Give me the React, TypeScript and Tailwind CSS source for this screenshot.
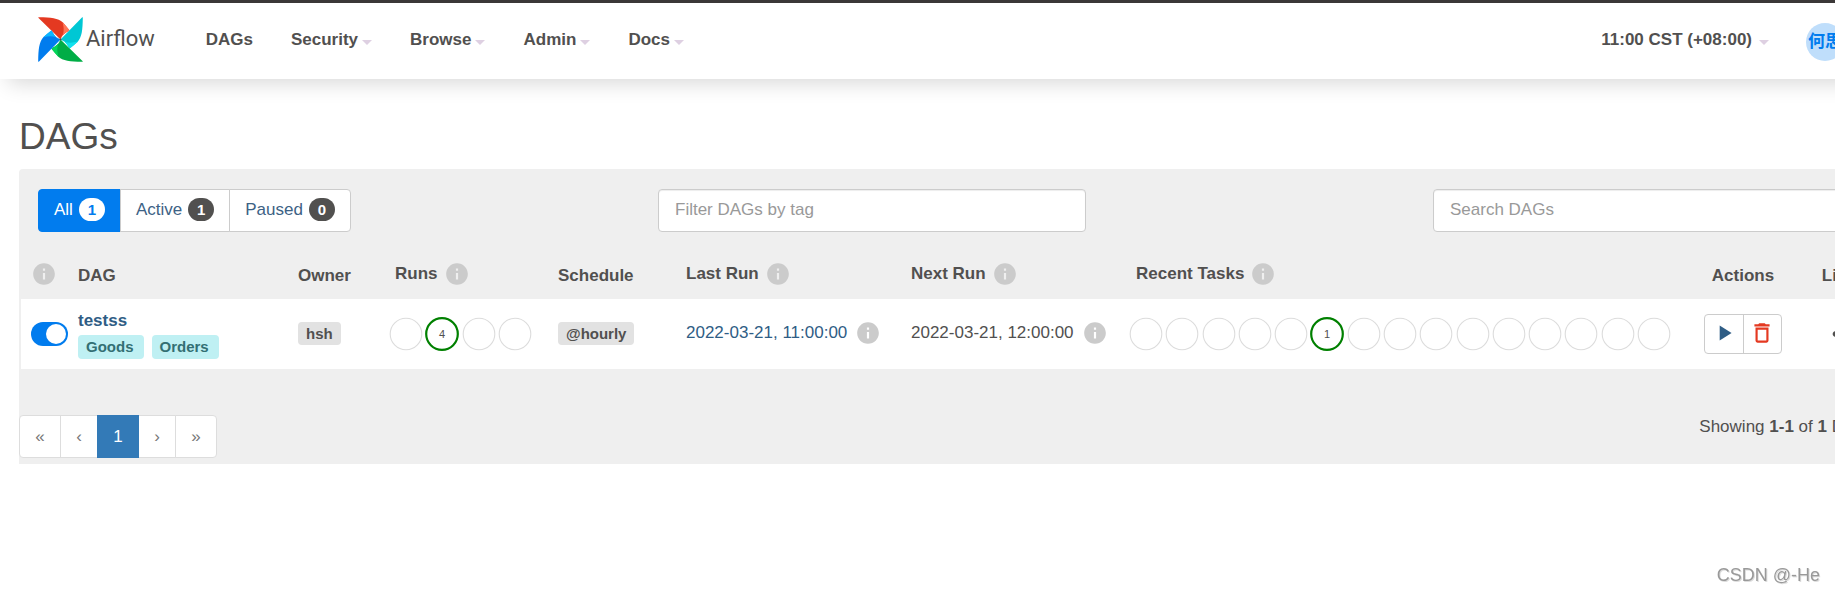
import { useState } from "react"
import { MdDeleteOutline, MdInfo, MdMoreHoriz, MdPlayArrow } from "react-icons/md"

const menus = ["Security", "Browse", "Admin", "Docs"]

const filters = [
  { label: "All", count: 1 },
  { label: "Active", count: 1 },
  { label: "Paused", count: 0 },
]

const tags = ["Goods", "Orders"]
const runs = [0, 4, 0, 0]
const recentTasks = [0, 0, 0, 0, 0, 1, 0, 0, 0, 0, 0, 0, 0, 0, 0]

// four blades, each a quarter turn from the last
const blades = [
  { angle: 0, dark: "#e43921", light: "#ff7557" },
  { angle: 90, dark: "#00c7d4", light: "#11e1ee" },
  { angle: 180, dark: "#00ad46", light: "#04d659" },
  { angle: 270, dark: "#017cee", light: "#0cb6ff" },
]

function Logo() {
  return (
    <svg width="45" height="45" viewBox="0 0 45 45" aria-hidden="true">
      {blades.map(({ angle, dark, light }) => (
        <g key={angle} transform={`rotate(${angle} 22.5 22.5)`}>
          <path d="M22.5 22.500 L.3 .8 Q0 0 1 .2 C13 .4 20 1 25 5.500 L31.500 13.500 C27 16 24 18 22.500 22.500Z" fill={dark} />
          <path d="M22.5 22.500 C26 17 26.500 12 24.500 5.200 Q28.500 9 31.800 13.500 C27 16 24 18 22.500 22.500Z" fill={light} />
        </g>
      ))}
      <circle cx="22.500" cy="22.500" r="1" fill="#51504f" />
    </svg>
  )
}

function Caret() {
  return <span className="mt-1 border-x-5 border-t-5 border-x-transparent border-t-[#ded0e2]" />
}

function Info() {
  return <MdInfo size={26} className="shrink-0 text-[#cbcbcb]" />
}

function Circles({ counts }: { counts: number[] }) {
  return (
    <div className="flex justify-between">
      {counts.map((count, i) => (
        <svg key={i} width="34" height="34" viewBox="0 0 34 34">
          <circle
            cx="17"
            cy="17"
            r="15.800"
            fill="none"
            stroke={count ? "#008000" : "#dcdcdc"}
            strokeWidth={count ? 2.2 : 1.1}
          />
          {count > 0 && (
            <text x="17" y="21" textAnchor="middle" fontSize="11" fill="#51504f">
              {count}
            </text>
          )}
        </svg>
      ))}
    </div>
  )
}

function Navbar() {
  return (
    <nav className="flex h-[79px] items-center border-t-3 border-[#3b3838] bg-white pb-1 pl-[38px] pr-[73px] font-bold shadow-[0_12px_20px_-8px_rgba(0,0,0,0.16)]">
      <a href="#" className="flex items-center gap-[3px] font-[Roboto,sans-serif] text-[22px] font-normal">
        <Logo />
        Airflow
      </a>
      <div className="ml-[51px] flex gap-[38px] pt-0.5">
        <a href="#">DAGs</a>
        {menus.map((menu) => (
          <button key={menu} className="flex items-center gap-1">
            {menu}
            <Caret />
          </button>
        ))}
      </div>
      <div className="ml-auto flex items-center gap-[37px] pt-0.5">
        <button className="flex items-center gap-[7px]">
          11:00 CST (+08:00)
          <Caret />
        </button>
        <button className="mt-1 flex size-[38px] items-center justify-center rounded-full bg-[#bfdefb] text-[#017cee]">
          何思
        </button>
      </div>
    </nav>
  )
}

function Toolbar({ filter, setFilter }: { filter: string; setFilter: (f: string) => void }) {
  const input =
    "h-[43px] rounded border border-[#ccc] bg-white px-4 pb-0.5 shadow-[inset_0_1px_1px_rgba(0,0,0,0.075)] placeholder:text-[#999]"

  return (
    <div className="flex px-[19px] pt-5">
      <div className="flex">
        {filters.map(({ label, count }) => {
          const active = filter === label
          return (
            <button
              key={label}
              onClick={() => setFilter(label)}
              className={`-ml-px flex h-[43px] items-center gap-1.5 border px-[15px] pb-0.5 first:ml-0 first:rounded-l last:rounded-r ${
                active ? "border-[#017cee] bg-[#017cee] text-white" : "border-[#ccc] bg-white text-[#3d6285]"
              }`}
            >
              {label}
              <span
                className={`flex h-[23px] w-[26px] items-center justify-center rounded-full text-[15px] font-bold ${
                  active ? "bg-white text-[#017cee]" : "bg-[#51504f] text-white"
                }`}
              >
                {count}
              </span>
            </button>
          )
        })}
      </div>
      <input type="text" aria-label="Filter DAGs by tag" placeholder="Filter DAGs by tag" className={`${input} ml-auto w-[428px]`} />
      <input type="search" aria-label="Search DAGs" placeholder="Search DAGs" className={`${input} ml-[347px] w-[446px]`} />
    </div>
  )
}

function DagTable() {
  const [enabled, setEnabled] = useState(true)

  return (
    <div className="px-0.5 pt-5">
      <table className="w-full table-fixed text-left">
        <colgroup>
          <col className="w-[47px]" />
          <col />
          <col className="w-[92px]" />
          <col className="w-[168px]" />
          <col className="w-[128px]" />
          <col className="w-[225px]" />
          <col className="w-[219px]" />
          <col className="w-[574px]" />
          <col className="w-[98px]" />
          <col className="w-[104px]" />
        </colgroup>
        <thead>
          <tr className="h-[47px]">
            <th className="pb-1 pl-2.5"><Info /></th>
            <th className="pl-2.5">DAG</th>
            <th className="pl-2.5">Owner</th>
            <th className="pb-1 pl-[15px]"><span className="flex items-center gap-1.5">Runs <Info /></span></th>
            <th className="pl-2.5">Schedule</th>
            <th className="pb-1 pl-2.5"><span className="flex items-center gap-1.5">Last Run <Info /></span></th>
            <th className="pb-1 pl-2.5"><span className="flex items-center gap-1.5">Next Run <Info /></span></th>
            <th className="pb-1 pl-4"><span className="flex items-center gap-1.5">Recent Tasks <Info /></span></th>
            <th className="text-center">Actions</th>
            <th className="text-center">Links</th>
          </tr>
        </thead>
        <tbody>
          <tr className="h-[70px] bg-white">
            <td className="pl-2.5">
              <label className="flex h-6 w-[37px] cursor-pointer items-center rounded-full bg-[#ccc] px-0.5 has-checked:justify-end has-checked:bg-[#017cee]">
                <input
                  type="checkbox"
                  aria-label="Toggle testss"
                  className="peer sr-only"
                  checked={enabled}
                  onChange={(e) => setEnabled(e.target.checked)}
                />
                <span className="size-5 rounded-full bg-white" />
              </label>
            </td>
            <td className="pl-2.5">
              <a href="#" className="block leading-6 font-bold text-[#2f5d85]">testss</a>
              <div className="flex gap-2 pt-0.5">
                {tags.map((tag) => (
                  <a key={tag} href="#" className="rounded bg-[#bff0f3] pr-2.5 pl-2 text-[15px] leading-6 font-bold text-[#336f73]">
                    {tag}
                  </a>
                ))}
              </div>
            </td>
            <td className="pl-2.5">
              <a href="#" className="inline-block rounded bg-[#e2e2e2] px-2 text-[15px] leading-[23px] font-bold">hsh</a>
            </td>
            <td className="pr-4 pl-[9px]"><Circles counts={runs} /></td>
            <td className="pl-2.5">
              <a href="#" className="inline-block rounded bg-[#e2e2e2] px-2 text-[15px] leading-[23px] font-bold">@hourly</a>
            </td>
            <td className="pb-0.5 pl-2.5">
              <span className="flex items-center gap-2 whitespace-nowrap">
                <a href="#" className="text-[#2f5d85]">2022-03-21, 11:00:00</a>
                <Info />
              </span>
            </td>
            <td className="pb-0.5 pl-2.5">
              <span className="flex items-center gap-2 whitespace-nowrap">
                <time>2022-03-21, 12:00:00</time>
                <Info />
              </span>
            </td>
            <td className="pr-[23px] pl-[9px]"><Circles counts={recentTasks} /></td>
            <td>
              <div className="mx-auto flex h-10 w-[78px] rounded border border-[#ccc]">
                <button aria-label="Trigger DAG" className="flex flex-1 items-center justify-center border-r border-[#ccc] pb-0.5 text-[#2f5d85]">
                  <MdPlayArrow size={26} />
                </button>
                <button aria-label="Delete DAG" className="flex flex-1 items-center justify-center pb-0.5 text-[#e43921]">
                  <MdDeleteOutline size={26} />
                </button>
              </div>
            </td>
            <td>
              <button aria-label="Links" className="mx-auto block"><MdMoreHoriz size={34} /></button>
            </td>
          </tr>
        </tbody>
      </table>
    </div>
  )
}

function Pagination() {
  const item = "-ml-px flex h-[43px] items-center justify-center border border-[#ddd] bg-white text-[#777]"

  return (
    <div className="flex items-start justify-between pt-[46px] pr-[21px] pb-1.5">
      <div className="flex pl-px">
        <a href="#" aria-label="First" className={`${item} w-[42px] rounded-l`}>«</a>
        <a href="#" aria-label="Previous" className={`${item} w-[38px]`}>‹</a>
        <a href="#" className="z-10 -ml-px flex h-[43px] w-[42px] items-center justify-center bg-[#337ab7] text-white">1</a>
        <a href="#" aria-label="Next" className={`${item} w-[38px]`}>›</a>
        <a href="#" aria-label="Last" className={`${item} w-[42px] rounded-r`}>»</a>
      </div>
      <div>
        Showing <strong>1-1</strong> of <strong>1</strong> DAGs
      </div>
    </div>
  )
}

export default function App() {
  const [filter, setFilter] = useState("All")

  return (
    <div className="min-h-screen overflow-hidden bg-white font-['Liberation_Sans',Arial,'Noto_Sans_CJK_SC',sans-serif] text-[17px] leading-6 text-[#51504f]">
      {/* content runs a little past the right edge */}
      <div className="w-[calc(100%+82px)]">
        <Navbar />
        <main className="px-[19px] pt-[38px]">
          <h1 className="text-[37px] leading-10">DAGs</h1>
          <div className="mt-3 rounded-t bg-[#efefef]">
            <Toolbar filter={filter} setFilter={setFilter} />
            <DagTable />
            <Pagination />
          </div>
        </main>
      </div>
      <div className="fixed right-[15px] bottom-1 text-[18px] text-[#999] [text-shadow:1px_1px_0_#ddd]">CSDN @-He</div>
    </div>
  )
}
